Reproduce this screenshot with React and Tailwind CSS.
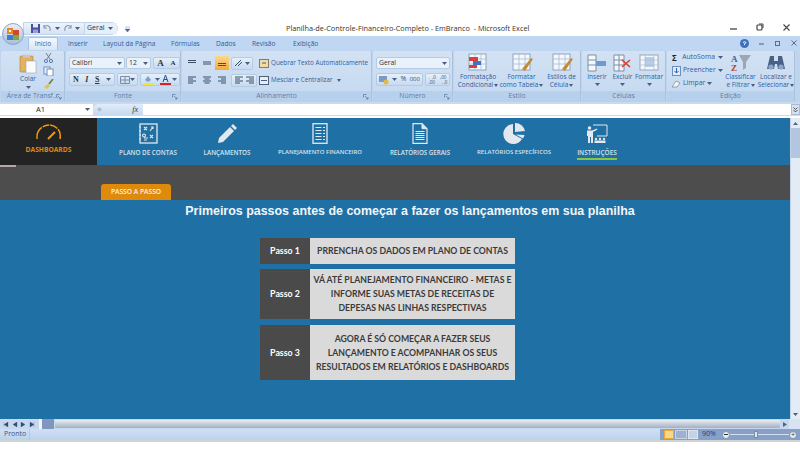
const Caret = () => <svg width="5" height="3" viewBox="0 0 5 3" className="shrink-0"><path d="M0 0h5L2.5 3z" fill="#4a5f80"/></svg>;
const TinyCaret = () => <svg width="4" height="3" viewBox="0 0 4 3" className="inline-block ml-[1px] align-middle"><path d="M0 0h4L2 3z" fill="#4a5f80"/></svg>;

const Box = ({ className = "", children }) => (
  <div className={`flex items-center h-[12px] rounded-[2px] border border-[#b4cbe6] bg-gradient-to-b from-[#e6f0fb] to-[#c6daf1] ${className}`}>{children}</div>
);

const Group = ({ w, label, launcher, children }) => (
  <div className={`flex flex-col shrink-0 h-full rounded-[2px] bg-gradient-to-b from-[#d3e2f4] to-[#c3d8f0] border-r border-[#a9c2e0] ${w}`}>
    <div className="flex-1 flex min-h-0">{children}</div>
    <div className="h-[11px] relative flex items-center justify-center bg-[#b7d0ec] text-[6.8px] text-[#5f7fa8] leading-none whitespace-nowrap">
      {label}
      {launcher && <svg width="6" height="6" viewBox="0 0 6 6" className="absolute right-[2px] top-[3px]"><path d="M.5.5h3M.5.5v3M2 2l3 3M5 3v2H3" stroke="#5f7fa8" fill="none" strokeWidth=".8"/></svg>}
    </div>
  </div>
);

const BigBtn = ({ w, icon, lines, caret, tail }) => (
  <div className={`flex flex-col items-center pt-[2px] shrink-0 ${w}`}>
    <div className="h-[19px] flex items-center justify-center">{icon}</div>
    <div className="mt-[1px] text-[6.5px] leading-[8px] text-[#2f5d9b] text-center whitespace-nowrap">
      {lines.map((l, i) => <div key={i}>{l}{tail && i === lines.length - 1 && <TinyCaret />}</div>)}
    </div>
    {caret && <div className="mt-[2px]"><Caret /></div>}
  </div>
);

const TableIcon = ({ pen, red }) => (
  <svg width="24" height="20" viewBox="0 0 24 20">
    <rect x="3" y="1" width="17" height="16" fill="#f4f7fb" stroke="#8ea5bf" />
    <path d="M3 6h17M3 11h17M9 1v16M15 1v16" stroke="#a9bcd2" strokeWidth=".8" />
    {red && <><rect x="3" y="4" width="9" height="4" fill="#d8403a"/><rect x="7" y="8" width="8" height="4" fill="#3f73c8"/><rect x="3" y="12" width="8" height="3" fill="#d8403a"/></>}
    {pen && <path d="M12 16l9-11 2 1-8 12z" fill="#c48b38" />}
  </svg>
);

const AlignLines = ({ v }) => (
  <svg width="10" height="8" viewBox="0 0 10 8">
    {v === "top" && <path d="M1 1.5h8M1 3.5h8" stroke="#3d4f68" strokeWidth="1.2" />}
    {v === "mid" && <path d="M1 3h8M1 5h8" stroke="#3d4f68" strokeWidth="1.2" />}
    {v === "bot" && <path d="M1 4.5h8M1 6.5h8" stroke="#3d4f68" strokeWidth="1.2" />}
    {v === "l" && <path d="M1 1h8M1 3h5M1 5h8M1 7h5" stroke="#3d4f68" />}
    {v === "c" && <path d="M1 1h8M2.5 3h5M1 5h8M2.5 7h5" stroke="#3d4f68" />}
    {v === "r" && <path d="M1 1h8M4 3h5M1 5h8M4 7h5" stroke="#3d4f68" />}
  </svg>
);

const Ribbon = () => (
  <div className="h-[52px] flex bg-[#bfd5ee] gap-[1px] px-[1px] pt-[1px]">
    <Group w="w-[64px]" label="Área de Transf..." launcher>
      <div className="flex pl-[17px] gap-[5px]">
        <div className="flex flex-col items-center pt-[3px] w-[20px]">
          <svg width="18" height="20" viewBox="0 0 18 20">
            <rect x="1" y="2" width="13" height="16" rx="1" fill="#e3b25e" stroke="#a97c32" strokeWidth=".6"/>
            <rect x="4" y="0.5" width="7" height="3" fill="#c9c9c9"/>
            <rect x="7" y="7" width="10" height="12" fill="#fbfbfb" stroke="#9aa6b5" strokeWidth=".6"/>
          </svg>
          <span className="text-[6.5px] leading-[8px] mt-[1px] text-[#2f5d9b]">Colar</span>
          <div className="mt-[3px]"><Caret /></div>
        </div>
        <div className="flex flex-col gap-[3px] pt-[2px]">
          <svg width="11" height="10" viewBox="0 0 11 10"><path d="M3 0l4 6M8 0L4 6" stroke="#6f7f93"/><circle cx="3" cy="8" r="1.6" fill="none" stroke="#5a78b0"/><circle cx="8" cy="8" r="1.6" fill="none" stroke="#5a78b0"/></svg>
          <svg width="11" height="10" viewBox="0 0 11 10"><rect x="1" y="1" width="6" height="7" fill="#eef3fa" stroke="#6d8fc0"/><rect x="4" y="3" width="6" height="7" fill="#fff" stroke="#6d8fc0"/></svg>
          <svg width="11" height="10" viewBox="0 0 11 10"><path d="M1 8l4-3 2 2-3 3z" fill="#e5c04e"/><path d="M6 5l4-5" stroke="#6a7f46" strokeWidth="1.6"/></svg>
        </div>
      </div>
    </Group>

    <Group w="w-[115px]" label="Fonte" launcher>
      <div className="flex flex-col pl-[3px] pt-[6px] gap-[4px]">
        <div className="flex gap-[1px] h-[12px]">
          <Box className="w-[56px] px-[2px] justify-between bg-none bg-[#e9f1fb] text-[6.8px] text-[#333]">Calibri<Caret /></Box>
          <Box className="w-[25px] px-[2px] justify-between bg-none bg-[#e9f1fb] text-[6.8px] text-[#333]">12<Caret /></Box>
          <Box className="w-[27px] ml-[1px] justify-around font-bold text-[#333] font-['Liberation_Serif',serif]">
            <span className="text-[9px] leading-none">A</span><span className="text-[7px] leading-none">A</span>
          </Box>
        </div>
        <div className="flex gap-[2px] h-[13px] font-['Liberation_Serif',serif] text-[8px] text-[#333] font-bold">
          <Box className="w-[46px] h-[13px] px-[3px] justify-between"><span>N</span><span className="italic">I</span><span className="underline">S</span><Caret /></Box>
          <Box className="w-[21px] h-[13px] px-[2px] justify-between">
            <svg width="10" height="8" viewBox="0 0 10 8"><path d="M.5.5h9v7h-9zM5 .5v7M.5 4h9" stroke="#7d8da3" fill="none"/></svg><Caret />
          </Box>
          <Box className="w-[40px] h-[13px] px-[2px] justify-between">
            <svg width="11" height="10" viewBox="0 0 11 10"><path d="M2 5l3-4 3 4-3 2z" fill="#7fa0c8"/><rect y="8" width="11" height="2" fill="#f5e52c"/></svg><Caret />
            <svg width="11" height="10" viewBox="0 0 11 10"><path d="M3 7l2.5-7L8 7M4 4.500h3" stroke="#2a4f8f" fill="none"/><rect y="8" width="11" height="2" fill="#d8202a"/></svg><Caret />
          </Box>
        </div>
      </div>
    </Group>

    <Group w="w-[190px]" label="Alinhamento" launcher>
      <div className="flex pl-[3px] pt-[5px] gap-[2px]">
        <div className="flex flex-col gap-[3px]">
          <div className="flex gap-[1px] items-center h-[14px]">
            <div className="w-[14px] flex justify-center"><AlignLines v="top" /></div>
            <div className="w-[14px] flex justify-center"><AlignLines v="mid" /></div>
            <div className="w-[14px] h-[14px] flex items-center justify-center bg-gradient-to-b from-[#fbd88a] to-[#f3a93c]"><AlignLines v="bot" /></div>
            <Box className="w-[22px] h-[13px] ml-[1px] px-[2px] justify-between">
              <svg width="10" height="8" viewBox="0 0 10 8"><path d="M1 7l6-6M4 7l4-4" stroke="#3d4f68"/></svg><Caret />
            </Box>
          </div>
          <div className="flex gap-[1px] items-center h-[14px]">
            <div className="w-[14px] flex justify-center"><AlignLines v="l" /></div>
            <div className="w-[14px] flex justify-center"><AlignLines v="c" /></div>
            <div className="w-[14px] flex justify-center"><AlignLines v="r" /></div>
            <Box className="w-[26px] h-[13px] ml-[1px] px-[1px] justify-around">
              <AlignLines v="l" /><AlignLines v="r" />
            </Box>
          </div>
        </div>
        <div className="flex flex-col gap-[5px] pt-[1px] text-[6.300px] leading-none text-[#2f5d9b] whitespace-nowrap">
          <div className="flex items-center gap-[2px] h-[12px]">
            <svg width="10" height="9" viewBox="0 0 10 9" className="shrink-0"><rect x=".5" y=".5" width="9" height="8" fill="#f2d9a5" stroke="#8b7a55"/><path d="M3 4h4" stroke="#3d5f96"/></svg>
            Quebrar Texto Automaticamente
          </div>
          <div className="flex items-center gap-[2px] h-[12px]">
            <svg width="10" height="9" viewBox="0 0 10 9" className="shrink-0"><rect x=".5" y=".5" width="9" height="8" fill="#e9eef5" stroke="#4f5f78"/><path d="M2 4.500h6" stroke="#3d5f96"/></svg>
            Mesclar e Centralizar <span className="ml-[1px]"><TinyCaret /></span>
          </div>
        </div>
      </div>
    </Group>

    <Group w="w-[80px]" label="Número" launcher>
      <div className="flex flex-col pl-[3px] pt-[6px] gap-[4px]">
        <Box className="w-[74px] px-[2px] justify-between bg-none bg-[#e9f1fb] text-[6.8px] text-[#333]">Geral<Caret /></Box>
        <div className="flex gap-[2px]">
          <Box className="w-[47px] h-[13px] px-[2px] justify-between text-[7px] text-[#3d4f68]">
            <svg width="10" height="10" viewBox="0 0 10 10"><rect y="1" width="8" height="6" fill="#7c9ac6"/><circle cx="7" cy="7" r="2.500" fill="#e5b93c"/></svg><Caret /><span>%</span><span className="text-[6px]">000</span>
          </Box>
          <Box className="w-[25px] h-[13px] justify-around text-[4.500px] text-[#3d4f68] leading-[5px]">
            <span className="text-center">←,0<br />,00</span><span className="text-center">,00<br />→,0</span>
          </Box>
        </div>
      </div>
    </Group>

    <Group w="w-[127px]" label="Estilo">
      <div className="flex pl-[2px]">
        <BigBtn w="w-[44px]" tail icon={<TableIcon red />} lines={["Formatação", "Condicional"]} />
        <BigBtn w="w-[43px]" tail icon={<TableIcon pen />} lines={["Formatar", "como Tabela"]} />
        <BigBtn w="w-[37px]" tail icon={<TableIcon pen />} lines={["Estilos de", "Célula"]} />
      </div>
    </Group>

    <Group w="w-[84px]" label="Células">
      <div className="flex pl-[2px]">
        <BigBtn w="w-[26px]" caret icon={<svg width="20" height="18" viewBox="0 0 20 18"><path d="M1 1h8v16H1zM1 6h8M1 11h8" fill="#f4f7fb" stroke="#7c8ea6"/><rect x="9" y="7" width="10" height="5" fill="#6f9ad0"/></svg>} lines={["Inserir"]} />
        <BigBtn w="w-[25px]" caret icon={<svg width="20" height="18" viewBox="0 0 20 18"><path d="M1 1h10v16H1zM1 6h10M1 11h10M6 1v16" fill="#f4f7fb" stroke="#7c8ea6"/><path d="M9 6l8 7M17 6l-8 7" stroke="#dd3c2d" strokeWidth="1.600"/></svg>} lines={["Excluir"]} />
        <BigBtn w="w-[28px]" caret icon={<svg width="20" height="18" viewBox="0 0 20 18"><rect x="1" y="1" width="18" height="15" fill="#f4f7fb" stroke="#95a7bd"/><rect x="6" y="3" width="9" height="10" fill="#b7cdea"/><path d="M6 1v15M15 1v15M1 6h18M1 11h18" stroke="#a9bcd2" strokeWidth=".7"/></svg>} lines={["Formatar"]} />
      </div>
    </Group>

    <Group w="w-[128px]" label="Edição">
      <div className="flex pl-[5px]">
        <div className="w-[51px] shrink-0 flex flex-col gap-[2px] pt-[1px] text-[6.800px] text-[#2f5d9b] whitespace-nowrap leading-none">
          <div className="flex items-center gap-[3px] h-[11px]"><span className="w-[8px] text-[#222] font-bold text-[8px]">Σ</span>AutoSoma <Caret /></div>
          <div className="flex items-center gap-[2px] h-[11px]"><svg width="9" height="10" viewBox="0 0 9 10"><rect x=".5" y=".5" width="8" height="9" fill="#dfe9f7" stroke="#6d8fc0"/><path d="M4.500 2v5M2.500 5l2 2 2-2" stroke="#2b62b0" fill="none"/></svg>Preencher <Caret /></div>
          <div className="flex items-center gap-[2px] h-[11px]"><svg width="9" height="9" viewBox="0 0 9 9"><path d="M0 8l4-6 4 2-3 4z" fill="#f3f5f8" stroke="#7a7f88" strokeWidth=".7"/></svg>Limpar <Caret /></div>
        </div>
        <BigBtn w="w-[35px]" tail icon={<svg width="20" height="19" viewBox="0 0 20 19"><path d="M8 2h12l-5 7v6l-3 2V9z" fill="#9ba7b5"/><text x="0" y="9" fontSize="9" fontWeight="700" fill="#3d5fa0" fontFamily="Liberation Serif">A</text><text x="0" y="18" fontSize="9" fontWeight="700" fill="#b5402f" fontFamily="Liberation Serif">Z</text></svg>} lines={["Classificar", "e Filtrar"]} />
        <BigBtn w="w-[36px]" tail icon={<svg width="20" height="18" viewBox="0 0 20 18"><path d="M4 2h4v5h4V2h4l3 13h-7l-1-5h-2l-1 5H1z" fill="#4a6288"/><circle cx="5" cy="13" r="2.600" fill="#8ea7c8"/><circle cx="15" cy="13" r="2.600" fill="#8ea7c8"/></svg>} lines={["Localizar e", "Selecionar"]} />
      </div>
    </Group>
  </div>
);

const NavItem = ({ w, icon, label, active, text = "text-[6.5px]" }) => (
  <div className={`flex flex-col items-center shrink-0 ${w}`}>
    <div className="h-[27px] mt-[2px] flex items-center justify-center">{icon}</div>
    <div className={`mt-[1px] ${text} leading-[9px] font-semibold text-[#d7e3ec] whitespace-nowrap font-['Open_Sans',sans-serif] ${active ? "border-b-2 border-[#8cc63f] pb-[1px]" : ""}`}>{label}</div>
  </div>
);

const Step = ({ h, label, lines }) => (
  <div className={`flex w-[255px] ${h}`}>
    <div className="w-[50px] shrink-0 bg-[#4a4a4a] flex items-center justify-center text-white font-bold text-[8.800px] font-['Lato',sans-serif]">{label}</div>
    <div className="flex-1 bg-[#dadada] flex flex-col items-center justify-center text-[#3a3a3a] font-bold text-[8.700px] leading-[14px] font-['Lato',sans-serif] whitespace-nowrap">
      {lines.map((l, i) => <div key={i}>{l}</div>)}
    </div>
  </div>
);

export default function App() {
  return (
    <div className="w-[800px] h-[467px] bg-white overflow-hidden flex flex-col font-['Open_Sans',sans-serif] relative">
      {/* Office button */}
      <div className="absolute left-[2px] top-[23px] w-[22px] h-[22px] rounded-full bg-gradient-to-b from-[#e9eef6] to-[#a9bedb] border border-[#8ea5c4] flex items-center justify-center z-10">
        <svg width="14" height="14" viewBox="0 0 14 14">
          <rect x="1" y="1" width="6" height="6" fill="#e8891f"/><rect x="7" y="3" width="6" height="5" fill="#d4462f"/>
          <rect x="1" y="8" width="6" height="5" fill="#3d7fc9"/><rect x="7" y="8" width="6" height="5" fill="#7cab3c"/>
          <rect x="3" y="3" width="2" height="2" fill="#fff"/>
        </svg>
      </div>

      {/* Title bar */}
      <div className="h-[36px] flex items-end shrink-0 relative">
        <div className="ml-[23px] mb-[1px] h-[13px] w-[95px] flex items-center gap-[3px] pl-[7px] rounded-r-full border border-[#c3d3e8] bg-gradient-to-b from-[#eef3fa] to-[#d5e2f3] shrink-0">
          <svg width="9" height="9" viewBox="0 0 9 9"><rect width="9" height="9" fill="#4a4fa0"/><rect x="2" y="0" width="5" height="3.500" fill="#e8eaf5"/><rect x="2" y="5.500" width="5" height="3.500" fill="#9aa0cf"/></svg>
          <svg width="9" height="9" viewBox="0 0 9 9"><path d="M1 3c3-3 7-1 6 4M1 1v3h3" fill="none" stroke="#8795ab" strokeWidth="1.100"/></svg>
          <Caret />
          <svg width="9" height="9" viewBox="0 0 9 9"><path d="M8 3C5 0 1 2 2 7M8 1v3H5" fill="none" stroke="#8795ab" strokeWidth="1.100"/></svg>
          <Caret />
          <div className="ml-[1px] flex-1 flex items-center justify-between pr-[4px] pl-[2px] h-full bg-[#e6eef8] border-l border-[#c3d3e8] text-[7px] text-[#333]">Geral<Caret /></div>
        </div>
        <div className="ml-[7px] mb-[4px]"><svg width="5" height="6" viewBox="0 0 5 6"><path d="M0 1h5M0 3h5l-2.500 3z" fill="#4f6590" stroke="#4f6590" strokeWidth=".4"/></svg></div>
        <div className="absolute left-[286px] top-[23px] text-[7.300px] leading-[10px] text-[#333] whitespace-nowrap">Planilha-de-Controle-Financeiro-Completo - EmBranco&nbsp; - Microsoft Excel</div>
        <div className="ml-auto flex items-center gap-[19px] pr-[10px] pb-[5px]">
          <svg width="7" height="7" viewBox="0 0 7 7"><path d="M0 5h7" stroke="#444" strokeWidth="1.300"/></svg>
          <svg width="8" height="8" viewBox="0 0 8 8"><rect x="1" y="2" width="5" height="5" rx="1" fill="none" stroke="#444" strokeWidth="1.200"/><path d="M3 1h4v4" fill="none" stroke="#444"/></svg>
          <svg width="7" height="7" viewBox="0 0 7 7"><path d="M.5.5l6 6M6.500.5l-6 6" stroke="#444" strokeWidth="1.100"/></svg>
        </div>
      </div>

      {/* Tabs */}
      <div className="h-[14px] shrink-0 flex items-end bg-[#bfd7f2] text-[6.600px] leading-[10px] text-[#2f5d9b] pl-[28px]">
        <div className="h-[13px] w-[30px] flex items-center justify-center bg-gradient-to-b from-[#f5f9fe] to-[#d7e5f5] rounded-t-[2px] border-x border-t border-[#a9c2e0]">Início</div>
        <div className="ml-[10px] w-[35px] h-[12px] flex items-center">Inserir</div>
        <div className="w-[68px] h-[12px] flex items-center whitespace-nowrap">Layout da Página</div>
        <div className="w-[45px] h-[12px] flex items-center">Fórmulas</div>
        <div className="w-[36px] h-[12px] flex items-center">Dados</div>
        <div className="w-[41px] h-[12px] flex items-center">Revisão</div>
        <div className="h-[12px] flex items-center">Exibição</div>
        <div className="ml-auto flex items-center gap-[10px] pr-[3px] h-[14px] text-[#5f6f85]">
          <svg width="9" height="9" viewBox="0 0 9 9"><circle cx="4.500" cy="4.500" r="4.500" fill="#3f70bf"/><path d="M3 3.500q1.500-1.500 3 0L4.500 5v1" stroke="#fff" fill="none"/></svg>
          <svg width="6" height="6" viewBox="0 0 6 6"><path d="M0 4h5" stroke="#5f6f85" strokeWidth="1.200"/></svg>
          <svg width="6" height="6" viewBox="0 0 6 6"><rect x=".5" y="1.500" width="4" height="4" fill="none" stroke="#5f6f85"/></svg>
          <svg width="6" height="6" viewBox="0 0 6 6"><path d="M.5.5l5 5M5.500.5l-5 5" stroke="#5f6f85"/></svg>
        </div>
      </div>

      <Ribbon />

      {/* Formula bar */}
      <div className="h-[14px] shrink-0 flex items-center bg-[#c9daef] pt-[2px] pb-[1px]">
        <div className="w-[93px] h-full bg-white flex items-center justify-between pr-[3px] text-[7.500px] text-[#222]">
          <span className="pl-[36px]">A1</span><Caret />
        </div>
        <div className="w-[50px] h-full flex items-center justify-between px-[4px] bg-gradient-to-b from-[#e1ecf9] to-[#c6d9ef] rounded-l-full font-['Liberation_Serif',serif] italic text-[8px] text-[#333]">
          <svg width="5" height="5" viewBox="0 0 5 5"><circle cx="2.500" cy="2.500" r="2" fill="#aebed1"/></svg>
          <span className="pr-[1px]">fx</span>
        </div>
        <div className="flex-1 h-full bg-white" />
        <div className="w-[9px] h-full bg-[#d5e2f2] border border-[#a9bcd4] flex items-center justify-center">
          <svg width="5" height="6" viewBox="0 0 5 6"><path d="M.5.500l2 2 2-2M.5 3l2 2 2-2" fill="none" stroke="#333" strokeWidth=".8"/></svg>
        </div>
      </div>

      {/* Sheet */}
      <div className="h-[301px] mt-[2px] shrink-0 flex">
        <div className="flex-1 flex flex-col min-w-0 font-['Open_Sans',sans-serif]">
          <div className="h-[47px] shrink-0 flex bg-[#1f70a5]">
            <div className="w-[97px] shrink-0 bg-[#232323] flex flex-col items-center">
              <svg width="27" height="17" viewBox="0 0 27 17" className="mt-[6px]" fill="none" stroke="#ef9a12">
                <path d="M2 15C1 5 9 1 14 1s13 4 11 14" strokeWidth="1.500" strokeDasharray="13 1 7 1 8 1 13" />
                <path d="M13 15l7-7" strokeWidth="2" />
              </svg>
              <div className="mt-[4px] text-[6.700px] leading-[9px] font-bold text-[#e08a0c]">DASHBOARDS</div>
            </div>
            <NavItem w="w-[102px]" label="PLANO DE CONTAS" text="text-[6.300px]" icon={
              <svg width="20" height="21" viewBox="0 0 20 21" fill="none" stroke="#e2e8ee">
                <rect x="2" y="1" width="17" height="19" strokeWidth="1.300"/><path d="M1 4h2M1 8h2M1 12h2M1 16h2" />
                <path d="M6 4l3 3M9 4L6 7M12 8l3-4M13 4h2v2M6 11a1.500 1.500 0 1 0 .01 0M6 15h4M12 12l3 3M15 12l-3 3M6 17h3" strokeWidth="1.100"/>
              </svg>} />
            <NavItem w="w-[56px]" label="LANÇAMENTOS" text="text-[6.300px]" icon={
              <svg width="20" height="20" viewBox="0 0 20 20"><path d="M1 19l1-5L13 3l4 4L6 18z" fill="#e2e8ee"/><path d="M14 2l2-2 4 4-2 2z" fill="#e2e8ee"/></svg>} />
            <NavItem w="w-[130px]" label="PLANEJAMENTO FINANCEIRO" text="text-[6px]" icon={
              <svg width="16" height="21" viewBox="0 0 16 21" fill="none" stroke="#e2e8ee">
                <rect x="1" y=".7" width="14" height="19.600" strokeWidth="1.300"/>
                <path d="M3.500 4.500h6M11 4.500h2M3.500 7.500h6M11 7.500h2M3.500 10.500h6M11 10.500h2M3.500 13.500h6M11 13.500h2M3.500 16.500h6M11 16.500h2" strokeWidth="1.100"/>
              </svg>} />
            <NavItem w="w-[70px]" label="RELATÓRIOS GERAIS" text="text-[6.200px]" icon={
              <svg width="16" height="21" viewBox="0 0 16 21" fill="none" stroke="#e2e8ee">
                <path d="M1 .7h9l5 5v14.600H1z" strokeWidth="1.200"/><path d="M10 .7v5h5" fill="#e2e8ee"/>
                <path d="M3.500 8.500h9M3.500 10.500h9M3.500 12.500h9M3.500 14.500h9M3.500 16.500h9" strokeWidth="1.100"/>
              </svg>} />
            <NavItem w="w-[118px]" label="RELATÓRIOS ESPECÍFICOS" text="text-[6px]" icon={
              <svg width="23" height="22" viewBox="0 0 23 22" fill="#e2e8ee">
                <path d="M10 1a10 10 0 1 0 9 15l-9-5z"/><path d="M12 0v9l10-1A10 10 0 0 0 12 0z"/><path d="M12.500 11.500l9 .5a10 10 0 0 1-1.500 3.500z"/>
              </svg>} />
            <NavItem w="w-[48px]" active label="INSTRUÇÕES" text="text-[6.500px]" icon={
              <svg width="22" height="20" viewBox="0 0 22 20" fill="#e2e8ee">
                <path d="M7 1h14v11H11" fill="none" stroke="#e2e8ee" strokeWidth="1"/>
                <circle cx="3.500" cy="4" r="1.800"/><path d="M1 6.500h5l5-2 .4 1L7 8v11H5v-6H4v6H2v-7H1z"/>
                <circle cx="10" cy="15" r="1.200"/><circle cx="14" cy="15" r="1.200"/><circle cx="18" cy="15" r="1.200"/>
                <rect x="8.500" y="16.500" width="11" height="2.500"/>
              </svg>} />
          </div>
          <div className="h-[35px] shrink-0 bg-[#4d4d4d] flex flex-col">
            <div className="h-[2px] w-[16px] bg-[#b5a8a6]" />
            <div className="mt-auto ml-[101px] w-[70px] h-[16px] rounded-t-[3px] bg-[#e08a0c] flex items-center justify-center text-[6.700px] font-semibold text-[#fdf3e0]">PASSO A PASSO</div>
          </div>
          <div className="flex-1 bg-[#1f70a5] flex flex-col items-center">
            <div className="mt-[3px] mb-[19px] pl-[30px] text-[12.450px] leading-[16px] font-bold text-[#f2f6f9] font-['Liberation_Sans',sans-serif] whitespace-nowrap">Primeiros passos antes de começar a fazer os lançamentos em sua planilha</div>
            <div className="flex flex-col pr-[15px]">
              <Step h="h-[26px]" label="Passo 1" lines={["PRRENCHA OS DADOS EM PLANO DE CONTAS"]} />
              <div className="h-[5px]" />
              <Step h="h-[50px]" label="Passo 2" lines={["VÁ ATÉ PLANEJAMENTO FINANCEIRO - METAS E", "INFORME SUAS METAS DE RECEITAS DE", "DEPESAS NAS LINHAS RESPECTIVAS"]} />
              <div className="h-[6px]" />
              <Step h="h-[55px]" label="Passo 3" lines={["AGORA É SÓ COMEÇAR A FAZER SEUS", "LANÇAMENTO E ACOMPANHAR OS SEUS", "RESULTADOS EM RELATÓRIOS E DASHBOARDS"]} />
            </div>
          </div>
        </div>
        {/* Vertical scrollbar */}
        <div className="w-[10px] shrink-0 bg-[#e3ebf5] flex flex-col items-center border-l border-[#c3d2e4]">
          <div className="h-[10px] flex items-center"><svg width="5" height="3" viewBox="0 0 5 3"><path d="M0 3h5L2.500 0z" fill="#51667f"/></svg></div>
          <div className="h-[30px] w-full bg-[#b2c6e0]" />
          <div className="flex-1" />
          <div className="h-[10px] flex items-center"><Caret /></div>
        </div>
      </div>

      {/* Sheet tabs row */}
      <div className="h-[10px] shrink-0 flex items-center bg-[#c7d8ee]">
        <div className="w-[38px] flex justify-around px-[2px]">
          {["M0 0v5M5 0L1 2.500 5 5z", "M5 0L1 2.500 5 5z", "M1 0l4 2.500L1 5z", "M5 0v5M1 0l4 2.500L1 5z"].map((d, i) => (
            <svg key={i} width="6" height="5" viewBox="0 0 6 5"><path d={d} fill="#2e4b7a" stroke="#2e4b7a" strokeWidth=".3"/></svg>
          ))}
        </div>
        <div className="w-[3px] h-full bg-[#eef3f9] ml-[1px]" />
        <div className="w-[12px] h-full bg-[#7f97bd]" />
        <div className="flex-1 h-[8px] bg-gradient-to-b from-[#e8edf3] to-[#a3afc1] rounded-[1px] ml-[1px]" />
        <div className="w-[9px] flex justify-center"><svg width="4" height="5" viewBox="0 0 4 5"><path d="M0 0l4 2.500L0 5z" fill="#51667f"/></svg></div>
        <div className="w-[11px] h-full bg-[#d7e3f2]" />
      </div>

      {/* Status bar */}
      <div className="h-[13px] shrink-0 flex items-center bg-gradient-to-b from-[#cfe0f5] to-[#bcd2ec] border-b-2 border-[#cdd6d2] text-[7px] text-[#3d5a8c]">
        <div className="pl-[4px] w-[30px] border-r border-[#b1c6e0] h-full flex items-center">Pronto</div>
        <div className="ml-auto w-[140px] h-full flex items-center bg-[#86a0c8]">
          <div className="flex ml-[4px]">
            <div className="w-[10px] h-[9px] border border-[#e9a93b] bg-[#f6d88c]" />
            <div className="w-[12px] h-[9px] bg-[#9db2d0] border border-[#c8d4e5] mx-[1px]" />
            <div className="w-[10px] h-[9px] bg-[#c3d2e6] border border-[#dce5f1]" />
          </div>
          <span className="ml-[4px] text-[#23447f]">90%</span>
          <div className="ml-[6px] w-[8px] h-[8px] rounded-full bg-[#e9eef6] border border-[#8295b1] flex items-center justify-center"><div className="w-[4px] h-[1px] bg-[#333]" /></div>
          <div className="flex-1 h-[1px] bg-[#d5e0ee] relative">
            <div className="absolute left-[24px] -top-[3px] w-[4px] h-[7px] bg-[#dfe6ef] border border-[#7b8ea9]" />
          </div>
          <div className="mr-[3px] w-[8px] h-[8px] rounded-full bg-[#e9eef6] border border-[#8295b1] flex items-center justify-center text-[7px] leading-none text-[#333]">+</div>
        </div>
      </div>
      <div className="flex-1 bg-white" />
    </div>
  );
}
